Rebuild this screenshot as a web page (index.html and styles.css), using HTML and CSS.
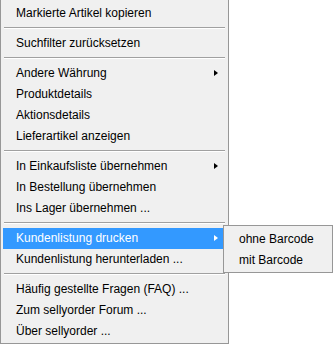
FILE: index.html
```html
<!DOCTYPE html>
<html lang="de">
<head>
<meta charset="utf-8">
<link rel="stylesheet" href="styles.css">
</head>
<body>
<div class="menu">
  <div class="item">Markierte Artikel kopieren</div>
  <div class="sep"></div>
  <div class="item">Suchfilter zurücksetzen</div>
  <div class="sep"></div>
  <div class="item has-sub">Andere Währung<span class="arrow"></span></div>
  <div class="item">Produktdetails</div>
  <div class="item">Aktionsdetails</div>
  <div class="item">Lieferartikel anzeigen</div>
  <div class="sep"></div>
  <div class="item has-sub">In Einkaufsliste übernehmen<span class="arrow"></span></div>
  <div class="item">In Bestellung übernehmen</div>
  <div class="item">Ins Lager übernehmen ...</div>
  <div class="sep"></div>
  <div class="item has-sub active">Kundenlistung drucken<span class="arrow"></span>
    <div class="submenu">
      <div class="item">ohne Barcode</div>
      <div class="item">mit Barcode</div>
    </div>
  </div>
  <div class="item">Kundenlistung herunterladen ...</div>
  <div class="sep"></div>
  <div class="item">Häufig gestellte Fragen (FAQ) ...</div>
  <div class="item">Zum sellyorder Forum ...</div>
  <div class="item">Über sellyorder ...</div>
</div>
</body>
</html>
```
FILE: styles.css
```css
html, body {
  margin: 0;
  padding: 0;
  background: #ffffff;
}
body {
  font-family: "Liberation Sans", Arial, sans-serif;
  font-size: 12px;
  color: #000000;
  display: flex;
  align-items: flex-start;
}
.menu {
  width: 223px;
  background: #f0f0f0;
  border: 1px solid #979797;
  border-top: none;
  padding: 3px 2px 0 2px;
  height: 340px;
}
.item {
  height: 21px;
  line-height: 21px;
  padding-left: 13px;
  white-space: nowrap;
}
.has-sub {
  position: relative;
}
.arrow {
  position: absolute;
  left: 211px;
  top: 7px;
  width: 0;
  height: 0;
  border-top: 3.5px solid transparent;
  border-bottom: 3.5px solid transparent;
  border-left: 4px solid #000000;
}
.active {
  background: #3399ff;
  color: #ffffff;
}
.active > .arrow {
  border-left-color: #ffffff;
}
.sep {
  height: 1px;
  margin: 3px 1px 4px 1px;
  background: #a0a0a0;
  border-bottom: 1px solid #ffffff;
}
.submenu {
  position: absolute;
  left: 220px;
  top: -3px;
  width: 108px;
  height: 43px;
  padding-top: 3px;
  background: #f0f0f0;
  border: 1px solid #979797;
  color: #000000;
}
.submenu .item {
  padding-left: 15px;
}
```
